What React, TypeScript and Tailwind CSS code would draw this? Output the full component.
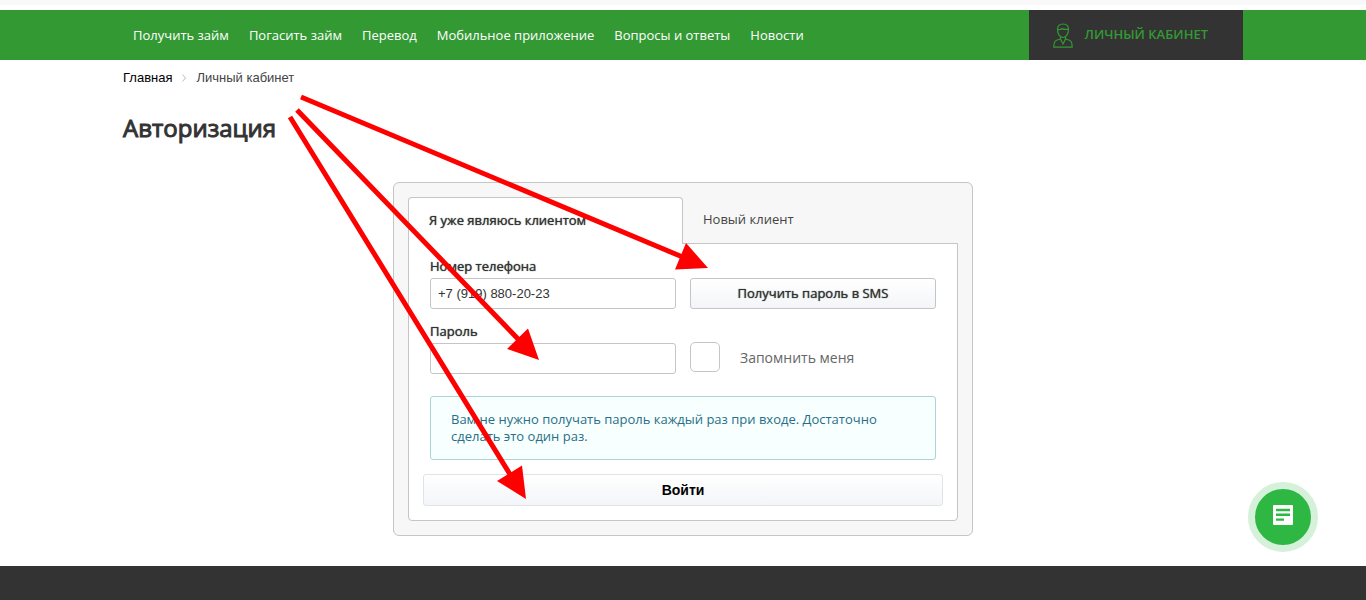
import { useState } from "react";

const navItems = [
  "Получить займ",
  "Погасить займ",
  "Перевод",
  "Мобильное приложение",
  "Вопросы и ответы",
  "Новости",
];

const UserIcon = () => (
  <svg width="20" height="25" viewBox="0 0 20 25" fill="none" stroke="currentColor" strokeWidth="1.200">
    <path d="M4.500 6.500C4.500 3 6.500 1 10 1s5.500 2 5.500 5.500c0 4.500-2.500 8-5.500 8s-5.500-3.500-5.500-8Z" />
    <path d="M4.500 6c1.500 1 3 .8 4-.4 2 .9 4.500 1 7 .7" />
    <path d="M7.500 14v2L10 21l2.500-5v-2" />
    <path d="M7.500 16 3.500 17.200C1.500 18 .8 19.500.8 24.200h18.400c0-4.700-.7-6.200-2.700-7L12.500 16" />
  </svg>
);

const ChatIcon = () => (
  <svg width="20" height="20" viewBox="0 0 20 20">
    <rect width="20" height="20" rx="1" fill="#fff" />
    <path d="M3 5h14M3 9.800h14M3 14.600h8" stroke="#2fb744" strokeWidth="2.400" />
  </svg>
);

const Arrows = () => (
  <svg
    className="absolute top-0 left-0 w-full h-[500px] pointer-events-none"
    viewBox="123 60 1120 500"
    fill="#f00"
    stroke="#f00"
  >
    <path d="M301 97 685 258M297 110l223 231M290 117l221 359" strokeWidth="5" />
    <path
      d="M686 243 675 269.500 708 268ZM528 328.500 507 349 539 360ZM522 465.500 497 481 526 499Z"
      stroke="none"
    />
  </svg>
);

const Header = () => (
  <div className="pt-[5px] bg-[#f9f9f9]">
    <header className="border-t-5 border-white bg-[#339933]">
      <div className="max-w-[1120px] mx-auto flex items-center justify-between h-[50px]">
        <nav className="flex pt-px">
          {navItems.map((item) => (
            <a key={item} href="#" className="px-[10px] text-[13px] text-white">
              {item}
            </a>
          ))}
        </nav>
        <a
          href="#"
          className="h-full pl-6 pr-[35px] flex items-center gap-3 bg-[#333333] text-[#339933] text-[13px] font-semibold uppercase"
        >
          <UserIcon />
          Личный кабинет
        </a>
      </div>
    </header>
  </div>
);

const LoginForm = () => {
  const [phone, setPhone] = useState("+7 (919) 880-20-23");
  const [password, setPassword] = useState("");
  const [remember, setRemember] = useState(false);

  return (
    <div className="max-w-[580px] mx-auto p-[14px] bg-[#f7f7f7] border border-[#c5c5c5] rounded-md">
      {/* Tabs */}
      <div className="flex">
        <button
          type="button"
          className="relative w-1/2 h-[47px] -mb-px px-5 text-left text-[13px] text-[#333333] [text-shadow:0_0_1px_#333333] bg-white border border-b-0 border-[#c5c5c5] rounded-t"
        >
          Я уже являюсь клиентом
        </button>
        <button
          type="button"
          className="w-1/2 h-[46px] px-5 text-left text-[13px] text-[#444444]"
        >
          Новый клиент
        </button>
      </div>

      <form
        onSubmit={(e) => e.preventDefault()}
        className="p-[14px] pt-[13px] bg-white border border-[#c5c5c5] rounded-b"
      >
        <div className="px-[7px]">
          <div className="grid grid-cols-2 gap-x-[14px] items-end">
            <div>
              <label
                htmlFor="phone"
                className="block pb-[2px] text-[13px] leading-[19px] text-[#333333] [text-shadow:0_0_1px_#333333]"
              >
                Номер телефона
              </label>
              <input
                id="phone"
                type="text"
                value={phone}
                onChange={(e) => setPhone(e.target.value)}
                className="w-full h-[31px] px-[7px] border border-[#c5c5c5] rounded-[3px] font-['Liberation_Sans',sans-serif] text-[13px] text-[#333333]"
              />
            </div>
            <button
              type="button"
              className="h-[31px] border border-[#c5c5c5] rounded-[3px] bg-linear-to-b from-white to-[#f3f5f8] text-[13px] text-[#333333] [text-shadow:0_0_1px_#333333]"
            >
              Получить пароль в SMS
            </button>
          </div>

          <div className="mt-[13px] grid grid-cols-2 gap-x-[14px] items-end">
            <div>
              <label
                htmlFor="password"
                className="block pb-[2px] text-[13px] leading-[19px] text-[#333333] [text-shadow:0_0_1px_#333333]"
              >
                Пароль
              </label>
              <input
                id="password"
                type="password"
                value={password}
                onChange={(e) => setPassword(e.target.value)}
                className="w-full h-[31px] px-[7px] border border-[#c5c5c5] rounded-[3px] text-[13px]"
              />
            </div>
            <label className="h-8 flex items-start gap-5 text-sm leading-8 text-[#666666]">
              <input
                type="checkbox"
                checked={remember}
                onChange={(e) => setRemember(e.target.checked)}
                className="appearance-none size-[30px] bg-white border border-[#c5c5c5] rounded-[5px] checked:bg-[#339933]"
              />
              Запомнить меня
            </label>
          </div>

          <p className="mt-[22px] px-5 py-[14px] bg-[#f8ffff] border border-[#a9d5d5] rounded-[3px] text-[13px] leading-[17px] text-[#276f86]">
            Вам не нужно получать пароль каждый раз при входе. Достаточно сделать это один раз.
          </p>
        </div>

        <button
          type="submit"
          className="mt-[14px] w-full h-8 border border-[#e2e3e5] rounded-[3px] bg-linear-to-b from-white to-[#f3f5f8] font-['Liberation_Sans',sans-serif] text-sm font-bold text-black"
        >
          Войти
        </button>
      </form>
    </div>
  );
};

const App = () => {
  return (
    <div className="min-h-screen flex flex-col bg-white font-['Open_Sans',sans-serif]">
      <Header />

      <main className="relative w-full max-w-[1120px] mx-auto pt-2 pb-[30px]">
        <div className="flex items-center gap-[10px] font-['Liberation_Sans',sans-serif] text-[13px] leading-5">
          <a href="#" className="text-black">
            Главная
          </a>
          <svg width="4" height="8" viewBox="0 0 4 8" fill="none" stroke="#bbbbbb">
            <path d="M.5.5 3.500 4 .5 7.500" />
          </svg>
          <span className="text-[#444444]">Личный кабинет</span>
        </div>
        <h1 className="mt-6 mb-[38px] text-2xl leading-8 text-[#333333] [-webkit-text-stroke:1px_#333333]">
          Авторизация
        </h1>
        <LoginForm />
        <Arrows />
      </main>

      <footer className="grow bg-[#333333]" />

      {/* Chat button */}
      <button
        type="button"
        aria-label="Чат"
        className="fixed right-12 bottom-12 size-[70px] pb-1 flex items-center justify-center rounded-full border-[7px] border-[#d5f1d9] bg-[#2fb744]"
      >
        <ChatIcon />
      </button>
    </div>
  );
};

export default App;
